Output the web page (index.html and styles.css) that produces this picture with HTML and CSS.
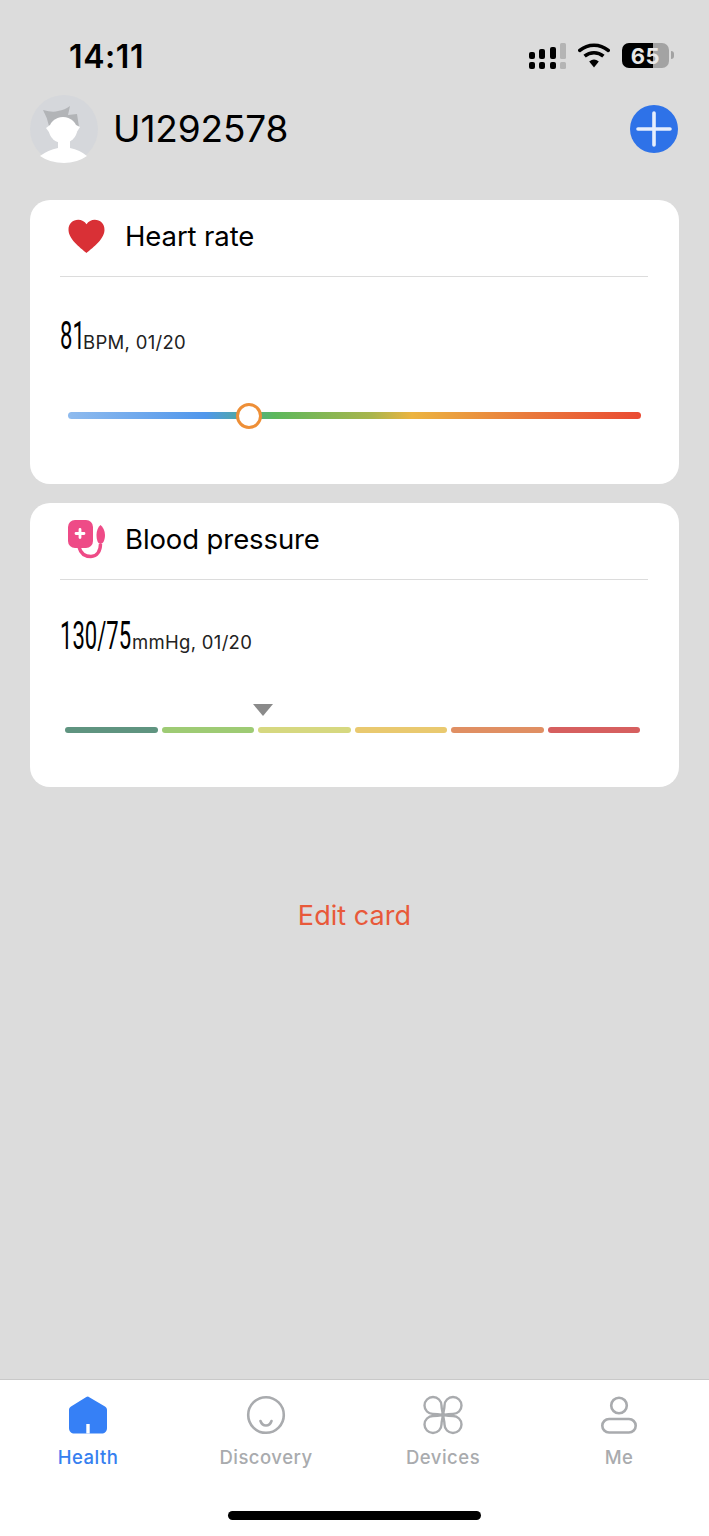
FILE: index.html
```html
<!DOCTYPE html>
<html lang="en">
<head>
<meta charset="utf-8">
<title>Health</title>
<link rel="stylesheet" href="styles.css">
</head>
<body>
<div class="screen">
  <div class="status">
    <span class="time">14:11</span>
    <div class="status-icons">
      <svg class="signal" width="38" height="27" viewBox="0 0 38 27">
        <g fill="#000">
          <rect x="0" y="9" width="6" height="7" rx="2"/><rect x="10" y="6" width="6" height="10" rx="2"/><rect x="21" y="4" width="6" height="12" rx="2"/>
          <rect x="0" y="19" width="6" height="7" rx="2"/><rect x="10" y="19" width="6" height="7" rx="2"/><rect x="21" y="19" width="6" height="7" rx="2"/>
        </g>
        <g fill="#b4b4b4"><rect x="31" y="0" width="6" height="16" rx="1.5"/><rect x="31" y="19" width="6" height="7" rx="1.5"/></g>
      </svg>
      <svg class="wifi" width="32" height="25" viewBox="0 0 32 25">
        <path d="M16 24.5 11.2 18.4a7.6 7.6 0 0 1 9.6 0Z" fill="#000"/>
        <path d="M6.6 13.2a14.6 14.6 0 0 1 18.8 0" fill="none" stroke="#000" stroke-width="3.6"/>
        <path d="M1.8 7.4a22 22 0 0 1 28.4 0" fill="none" stroke="#000" stroke-width="3.6" stroke-linecap="round"/>
      </svg>
      <div class="battery"><span class="battery-level">65</span><i class="battery-tip"></i></div>
    </div>
  </div>

  <header class="top">
    <svg class="avatar" width="68" height="68" viewBox="0 0 68 68">
      <circle cx="34" cy="34" r="34" fill="#d5d7db"/>
      <path d="M13 15Q23 18 28 16 35 15 40 11L38 20 47 19 49 32 40 31H25L19 31Q17 22 13 15Z" fill="#b2b4b7"/>
      <ellipse cx="33" cy="35" rx="14" ry="13" fill="#fff"/>
      <path d="M20 30 16 33 21 40ZM46 30 50 32 45 40Z" fill="#fff"/>
      <path d="M10 61Q18 55 28 53V44H40V53Q50 55 57 61 47 68 34 68 20 68 10 61Z" fill="#fff"/>
    </svg>
    <span class="username">U1292578</span>
    <svg class="add" width="48" height="48" viewBox="0 0 48 48">
      <circle cx="24" cy="24" r="24" fill="#2e72e8"/>
      <path d="M8 24H40M24 8V40" stroke="#e6eefc" stroke-width="3.600" stroke-linecap="round"/>
    </svg>
  </header>

  <main class="cards">
    <section class="card">
      <div class="card-head">
        <svg class="card-icon icon-heart" width="37" height="35" viewBox="0 0 38 36">
          <path d="M19 35C15 31 1 22 .5 11.5.2 4.800 5 .8 10.500.8 14 .8 17 2.500 19 5.500 21 2.500 24 .8 27.500.8 33 .8 37.800 4.800 37.500 11.500 37 22 23 31 19 35Z" fill="#d93036"/>
        </svg>
        <h2 class="card-title">Heart rate</h2>
      </div>
      <div class="reading">
        <span class="num num-short">81</span><span class="unit">BPM, 01/20</span>
      </div>
      <div class="gradient-track">
        <span class="knob" style="left: 31.6%"></span>
      </div>
    </section>

    <section class="card">
      <div class="card-head">
        <svg class="card-icon" width="37" height="39" viewBox="0 0 37 39">
          <rect x="0" y="0" width="25" height="28" rx="7" fill="#ee4b87"/>
          <path d="M12 9.500V17.500M8 13.500H16" stroke="#fff" stroke-width="2.800" stroke-linecap="round"/>
          <path d="M11 27C13 35 19 36.500 23 36.500 29 36.500 32.500 31 32.500 24" fill="none" stroke="#ee4b87" stroke-width="3.400"/>
          <path d="M32.500 5C35 7 37 11 37 15 37 20 35 24 32.500 24 30 24 28.500 20 28.500 15 28.500 11 30 7 32.500 5Z" fill="#ee4b87"/>
        </svg>
        <h2 class="card-title">Blood pressure</h2>
      </div>
      <div class="reading reading-tight">
        <span class="num num-long">130/75</span><span class="unit">mmHg, 01/20</span>
      </div>
      <div class="scale">
        <span class="pointer"></span>
        <div class="segments">
          <i class="seg seg-1"></i><i class="seg seg-2"></i><i class="seg seg-3"></i><i class="seg seg-4"></i><i class="seg seg-5"></i><i class="seg seg-6"></i>
        </div>
      </div>
    </section>

    <div class="edit">Edit card</div>
  </main>

  <nav class="tabbar">
    <div class="tabs">
      <div class="tab tab-active">
        <svg width="40" height="40" viewBox="0 0 40 40">
          <path d="M20 1.500 37 11.500C38.300 12.300 39 13.400 39 15V33C39 36.500 36.800 38.500 33.500 38.500H6.500C3.200 38.500 1 36.500 1 33V15C1 13.400 1.700 12.300 3 11.500L17.500 2.500C18.500 1.800 19.300 1.500 20 1.500Z" fill="#3680f6"/>
          <rect x="18.300" y="29" width="3.400" height="9.500" fill="#fff"/>
        </svg>
        <span>Health</span>
      </div>
      <div class="tab">
        <svg width="40" height="40" viewBox="0 0 40 40" fill="none" stroke="#a9abae" stroke-width="2.600">
          <circle cx="20" cy="20" r="17.800"/>
          <path d="M14.500 26C16.500 32 23.500 32 25.500 26" stroke-linecap="round"/>
        </svg>
        <span>Discovery</span>
      </div>
      <div class="tab">
        <svg width="40" height="40" viewBox="0 0 40 40" fill="none" stroke="#a9abae" stroke-width="2.400">
          <path d="M20 20C17 19.500 13 19 10 19A8.500 8.500 0 1 1 18.500 10.500C18.500 13.500 19.500 17 20 20Z"/>
          <path d="M20 20C23 19.500 27 19 30 19A8.500 8.500 0 1 0 21.500 10.500C21.500 13.500 20.500 17 20 20Z"/>
          <path d="M20 20C17 20.500 13 21 10 21A8.500 8.500 0 1 0 18.500 29.500C18.500 26.500 19.500 23 20 20Z"/>
          <path d="M20 20C23 20.500 27 21 30 21A8.500 8.500 0 1 1 21.500 29.500C21.500 26.500 20.500 23 20 20Z"/>
        </svg>
        <span>Devices</span>
      </div>
      <div class="tab">
        <svg width="40" height="40" viewBox="0 0 40 40" fill="none" stroke="#a9abae" stroke-width="2.600">
          <circle cx="20" cy="10.500" r="7.800"/>
          <rect x="3.300" y="24" width="33.400" height="13.500" rx="6.750"/>
        </svg>
        <span>Me</span>
      </div>
    </div>
    <div class="home-indicator"></div>
  </nav>
</div>
</body>
</html>
```

FILE: styles.css
```css
* { box-sizing: border-box; }

html, body {
  margin: 0;
  padding: 0;
}

body {
  font-family: Inter, "Liberation Sans", sans-serif;
  color: #000;
  background: #dcdcdc;
}

.screen {
  width: 709px;
  height: 1536px;
  display: flex;
  flex-direction: column;
  overflow: hidden;
}

.status {
  height: 95px;
  flex: none;
  display: flex;
  justify-content: space-between;
  align-items: flex-start;
  padding: 43px 40px 0 69px;
}

.time {
  font-size: 32px;
  line-height: 27px;
  font-weight: 600;
  letter-spacing: .6px;
}

.status-icons {
  display: flex;
  align-items: flex-start;
}

.signal { margin: 0 11px 0 0; }
.wifi { margin: 0 12px 0 0; }

.battery {
  position: relative;
  width: 47px;
  height: 25px;
  border-radius: 7px;
  background: linear-gradient(90deg, #000 0 65%, #a3a3a3 65% 100%);
  display: flex;
  justify-content: center;
  align-items: center;
}

.battery-level {
  color: #e8e8e8;
  font-size: 22px;
  font-weight: 700;
  letter-spacing: .5px;
}

.battery-tip {
  position: absolute;
  right: -5px;
  top: 8px;
  width: 3px;
  height: 8px;
  border-radius: 0 3px 3px 0;
  background: #a3a3a3;
}

.top {
  height: 68px;
  flex: none;
  display: flex;
  align-items: center;
  padding: 0 31px 0 30px;
}

.avatar { flex: none; }

.username {
  margin-left: 15px;
  font-size: 37px;
  line-height: 68px;
  letter-spacing: -.15px;
  flex: 1;
}

.cards {
  flex: 1;
  display: flex;
  flex-direction: column;
  gap: 19px;
  padding: 37px 30px 0;
}

.card {
  height: 284px;
  background: #fff;
  border-radius: 20px;
}

.card-head {
  height: 77px;
  margin: 0 31px 0 30px;
  padding: 0 0 4px 8px;
  display: flex;
  align-items: center;
  border-bottom: 1px solid #dcdcdc;
}

.card-icon {
  flex: none;
}

.icon-heart {
  margin-top: 1px;
}

.card-title {
  margin: 0 0 0 20px;
  font-size: 27.500px;
  font-weight: 400;
  line-height: 36px;
  letter-spacing: -.1px;
}

.reading {
  margin: 34px 0 0 30px;
  height: 50px;
  display: flex;
  align-items: baseline;
  white-space: nowrap;
}

.reading-tight {
  margin-top: 31px;
}

.num {
  display: inline-block;
  font-family: Roboto, "Liberation Sans", sans-serif;
  font-weight: 400;
  font-size: 38px;
  line-height: 50px;
  transform-origin: left center;
  transform: scaleX(.58);
}

.num-short { width: 23px; }
.num-long { width: 72px; }

.unit {
  font-size: 18.500px;
  letter-spacing: .3px;
  color: #222;
}

.gradient-track {
  position: relative;
  margin: 51px 38px 0;
  height: 7px;
  border-radius: 4px;
  background: linear-gradient(90deg, #8fbbee 0%, #5097ec 24%, #4fa8a6 30%, #5cb85c 36%, #a9b54c 53%, #ecb440 60%, #e97a3c 80%, #ea4a32 100%);
}

.knob {
  position: absolute;
  top: 50%;
  width: 26px;
  height: 26px;
  margin: -13px 0 0 -13px;
  border: 3px solid #ee8f37;
  border-radius: 50%;
  background: #fff;
}

.scale {
  position: relative;
  margin: 66px 39px 0 35px;
}

.pointer {
  position: absolute;
  left: 188px;
  top: -23px;
  width: 0;
  height: 0;
  border-left: 10px solid transparent;
  border-right: 10px solid transparent;
  border-top: 12px solid #8a8a8a;
}

.segments {
  display: flex;
  gap: 4px;
}

.seg {
  flex: 1;
  height: 6px;
  border-radius: 3px;
}

.seg-1 { background: #5f9480; }
.seg-2 { background: #9ecb74; }
.seg-3 { background: #d6d880; }
.seg-4 { background: #e9c96f; }
.seg-5 { background: #e08f63; }
.seg-6 { background: #d65f5f; }

.edit {
  margin-top: 92px;
  text-align: center;
  font-size: 27px;
  line-height: 36px;
  letter-spacing: .05px;
  color: #e8593a;
}

.tabbar {
  height: 157px;
  flex: none;
  background: #fff;
  border-top: 1px solid #c9c9c9;
  position: relative;
}

.tabs {
  display: grid;
  grid-template-columns: 88px 178px 177px 176px;
  padding-top: 15px;
}

.tab {
  display: flex;
  flex-direction: column;
  align-items: center;
  width: 0;
  justify-self: end;
  color: #a9abae;
  font-size: 18.500px;
  font-weight: 450;
  line-height: 24px;
  letter-spacing: .5px;
  white-space: nowrap;
}

.tab svg {
  flex: none;
  margin-bottom: 10px;
}

.tab-active { color: #3680f0; }

.home-indicator {
  position: absolute;
  left: 228px;
  top: 131px;
  width: 253px;
  height: 9px;
  border-radius: 5px;
  background: #000;
}
```
